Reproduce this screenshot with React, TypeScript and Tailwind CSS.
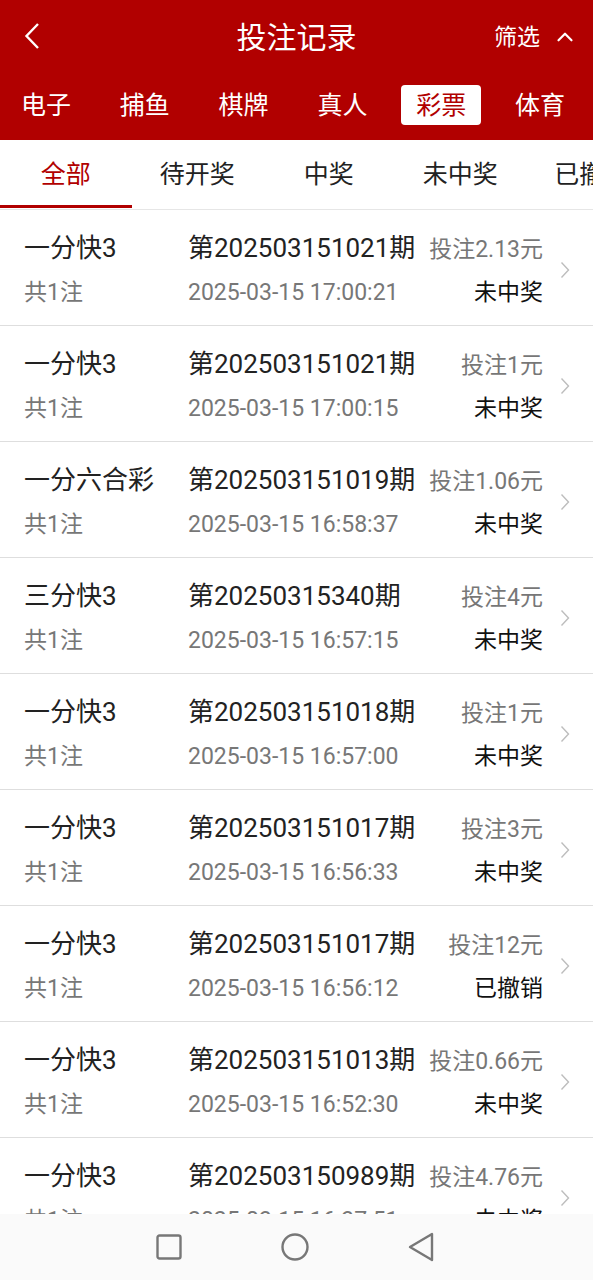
import { ChevronUp } from "lucide-react";

const categories = ["电子", "捕鱼", "棋牌", "真人", "彩票", "体育"];
const statusTabs = ["全部", "待开奖", "中奖", "未中奖", "已撤销"];

type Bet = {
  game: string;
  period: string;
  amount: string;
  time: string;
  status: string;
};

const bets: Bet[] = [
  { game: "一分快3", period: "第202503151021期", amount: "投注2.13元", time: "2025-03-15 17:00:21", status: "未中奖" },
  { game: "一分快3", period: "第202503151021期", amount: "投注1元", time: "2025-03-15 17:00:15", status: "未中奖" },
  { game: "一分六合彩", period: "第202503151019期", amount: "投注1.06元", time: "2025-03-15 16:58:37", status: "未中奖" },
  { game: "三分快3", period: "第20250315340期", amount: "投注4元", time: "2025-03-15 16:57:15", status: "未中奖" },
  { game: "一分快3", period: "第202503151018期", amount: "投注1元", time: "2025-03-15 16:57:00", status: "未中奖" },
  { game: "一分快3", period: "第202503151017期", amount: "投注3元", time: "2025-03-15 16:56:33", status: "未中奖" },
  { game: "一分快3", period: "第202503151017期", amount: "投注12元", time: "2025-03-15 16:56:12", status: "已撤销" },
  { game: "一分快3", period: "第202503151013期", amount: "投注0.66元", time: "2025-03-15 16:52:30", status: "未中奖" },
  { game: "一分快3", period: "第202503150989期", amount: "投注4.76元", time: "2025-03-15 16:37:51", status: "未中奖" },
];

const BetRow = ({ bet }: { bet: Bet }) => (
  <div className="flex items-center h-[116px] shrink-0 border-b border-[#dedede] pl-6 pr-[23px] pt-[4px]">
    <div className="flex flex-col w-[164px] shrink-0">
      <span className="text-[26px] leading-[36px] text-[#222]">{bet.game}</span>
      <span className="text-[23px] leading-[32px] mt-[11px] text-[#777]">共1注</span>
    </div>
    <div className="flex flex-col flex-1 min-w-0">
      <div className="flex items-baseline justify-between">
        <span className="text-[26px] leading-[36px] text-[#222] whitespace-nowrap">{bet.period}</span>
        <span className="text-[23px] leading-[32px] text-[#777] whitespace-nowrap">{bet.amount}</span>
      </div>
      <div className="flex items-baseline justify-between mt-[11px]">
        <span className="text-[23px] leading-[32px] text-[#777] whitespace-nowrap">{bet.time}</span>
        <span className="text-[23px] leading-[32px] text-[#111] whitespace-nowrap">{bet.status}</span>
      </div>
    </div>
    <svg width="10" height="18" viewBox="0 0 10 18" className="ml-[17px] shrink-0">
      <path d="M1.5 1.5 L8.5 9 L1.5 16.5" fill="none" stroke="#bdbdbd" strokeWidth="1.4" />
    </svg>
  </div>
);

export default function App() {
  return (
    <div
      className="relative flex flex-col w-[593px] h-[1280px] overflow-hidden bg-white"
      style={{ fontFamily: 'Roboto, "Noto Sans CJK SC", sans-serif' }}
    >
      <div className="bg-[#b10000] h-[140px] shrink-0 flex flex-col text-white">
        <div className="relative flex items-center justify-center h-[76px]">
          <svg width="16" height="28" viewBox="0 0 16 28" className="absolute left-[24px] top-[22px]">
            <path d="M14 2 L2.5 14 L14 26" fill="none" stroke="#fff" strokeWidth="2.4" />
          </svg>
          <span className="text-[30px] leading-none">投注记录</span>
          <div className="absolute right-[15px] top-[24px] flex items-center gap-[12px]">
            <span className="text-[23px] leading-none">筛选</span>
            <ChevronUp className="w-[26px] h-[26px]" strokeWidth={2} />
          </div>
        </div>
        <div className="flex items-center justify-between pl-[21px] pr-[28px] h-[58px]">
          {categories.map((c) => (
            <div key={c} className="relative flex items-center justify-center w-[50px]">
              {c === "彩票" ? (
                <span className="flex items-center justify-center w-[80px] h-[40px] -mx-[15px] rounded-[4px] bg-white text-[#b10000] text-[25px] leading-none">
                  {c}
                </span>
              ) : (
                <span className="text-[25px] leading-none whitespace-nowrap">{c}</span>
              )}
            </div>
          ))}
        </div>
      </div>

      <div className="flex h-[70px] shrink-0 border-b border-[#e6e6e6] overflow-hidden">
        {statusTabs.map((t, i) => (
          <div
            key={t}
            className={`relative flex items-center justify-center w-[131.5px] shrink-0 text-[25px] whitespace-nowrap ${
              i === 0 ? "text-[#b10000]" : "text-[#222]"
            }`}
          >
            {t}
            {i === 0 && <div className="absolute left-0 right-0 bottom-[1px] h-[3px] bg-[#b10000]" />}
          </div>
        ))}
      </div>

      <div className="flex flex-col flex-1 overflow-hidden">
        {bets.map((b, i) => (
          <BetRow key={i} bet={b} />
        ))}
      </div>

      <div className="flex items-center justify-center gap-[97px] h-[66px] shrink-0 bg-[#fafafa] pr-[4px]">
        <svg width="28" height="28" viewBox="0 0 28 28">
          <rect x="2.5" y="2.5" width="23" height="23" rx="2" fill="none" stroke="#777" strokeWidth="2.4" />
        </svg>
        <svg width="30" height="30" viewBox="0 0 30 30">
          <circle cx="15" cy="15" r="12.5" fill="none" stroke="#777" strokeWidth="2.4" />
        </svg>
        <svg width="28" height="30" viewBox="0 0 28 30">
          <path d="M25 2 L25 28 L3 15 Z" fill="none" stroke="#777" strokeWidth="2.4" strokeLinejoin="round" />
        </svg>
      </div>
    </div>
  );
}
